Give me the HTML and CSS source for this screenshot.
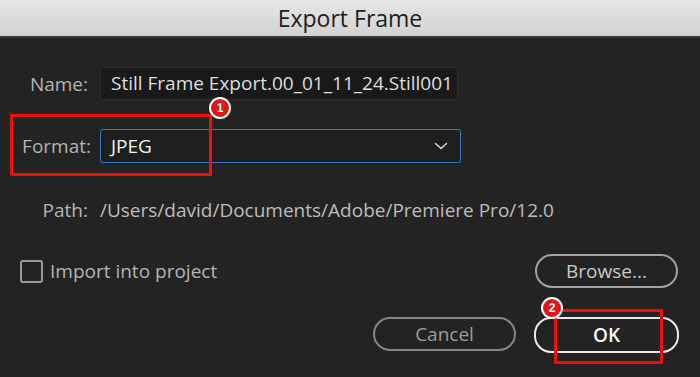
FILE: index.html
```html
<!DOCTYPE html>
<html lang="en">
<head>
    <meta charset="UTF-8">
    <meta name="viewport" content="width=device-width, initial-scale=1.0">
    <title>Export Frame</title>
    <link rel="stylesheet" href="styles.css">
</head>
<body>
    <div class="titlebar">Export Frame</div>

    <div class="dialog">
        <div class="form-row name-row">
            <label class="field-label" for="name">Name:</label>
            <div class="text-field" id="name">Still Frame Export.00_01_11_24.Still001</div>
        </div>

        <div class="form-row format-row">
            <label class="field-label">Format:</label>
            <div class="select-field">
                <span>JPEG</span>
                <svg class="chevron" width="14" height="8" viewBox="0 0 14 8">
                    <path d="M1.5 1.5 L7 6.5 L12.5 1.5" fill="none" stroke="#cfcfcf" stroke-width="1.6" stroke-linecap="round" stroke-linejoin="round"/>
                </svg>
            </div>
        </div>

        <div class="form-row path-row">
            <span class="field-label">Path:</span>
            <span class="path-value">/Users/david/Documents/Adobe/Premiere Pro/12.0</span>
        </div>

        <div class="import-row">
            <label class="checkbox">
                <span class="box"></span>
                Import into project
            </label>
            <button class="pill browse">Browse...</button>
        </div>

        <div class="actions">
            <button class="pill cancel">Cancel</button>
            <button class="pill ok">OK</button>
        </div>

        <!-- tutorial annotations -->
        <div class="mark mark-format"></div>
        <div class="badge badge-1">1</div>
        <div class="mark mark-ok"></div>
        <div class="badge badge-2">2</div>
    </div>
</body>
</html>
```

FILE: styles.css
```css
html, body {
    margin: 0;
    padding: 0;
    background-color: #232323;
}
body {
    width: 700px;
    height: 377px;
    overflow: hidden;
    font-family: "Open Sans", "Noto Sans", sans-serif;
}
.titlebar {
    height: 36px;
    line-height: 36px;
    text-align: center;
    font-size: 23px;
    color: #1e1e1e;
    background: linear-gradient(#e6e6e6, #d2d2d2);
    border-bottom: 2px solid #3a3a3a;
}
.dialog {
    position: relative;
    height: 339px;
    padding: 29px 0 0 0;
    box-sizing: border-box;
}
.form-row {
    display: flex;
    align-items: center;
}
.field-label {
    width: 88px;
    text-align: right;
    padding-right: 12px;
    font-size: 19px;
    line-height: 24px;
    color: #b4b4b4;
}
.text-field {
    width: 358px;
    height: 33px;
    box-sizing: border-box;
    padding: 0 0 0 10px;
    line-height: 31px;
    font-size: 19px;
    color: #dedede;
    background-color: #191919;
    border: 1px solid #2c2c2c;
    border-radius: 2px;
    white-space: nowrap;
    overflow: hidden;
}
.format-row {
    margin-top: 29px;
}
.format-row .field-label {
    width: 91px;
    padding-right: 9px;
}
.select-field {
    width: 361px;
    height: 34px;
    box-sizing: border-box;
    padding: 0 12px 0 10px;
    display: flex;
    align-items: center;
    justify-content: space-between;
    font-size: 19px;
    color: #f2f2f2;
    background-color: #1e1e1e;
    border: 1px solid #3b78c2;
    border-radius: 3px;
}
.path-row {
    margin-top: 35px;
}
.path-value {
    font-size: 19px;
    line-height: 24px;
    color: #bdbdbd;
}
.import-row {
    display: flex;
    align-items: center;
    justify-content: space-between;
    margin-top: 32px;
    padding: 0 22px 0 20px;
}
.checkbox {
    display: flex;
    align-items: center;
    gap: 7px;
    font-size: 19px;
    color: #b4b4b4;
}
.box {
    width: 19px;
    height: 19px;
    border: 2px solid #9a9a9a;
    border-radius: 3px;
}
.pill {
    width: 143px;
    height: 34px;
    border-radius: 17px;
    background: transparent;
    font-family: "Open Sans", "Noto Sans", sans-serif;
    font-size: 19px;
    padding: 0;
    cursor: pointer;
}
.browse {
    border: 2px solid #a2a2a2;
    color: #c8c8c8;
}
.actions {
    display: flex;
    justify-content: flex-end;
    gap: 18px;
    margin-top: 29px;
    padding-right: 21px;
}
.cancel {
    border: 2px solid #868686;
    color: #9c9c9c;
}
.ok {
    width: 145px;
    height: 36px;
    border: 2px solid #ececec;
    color: #ffffff;
    font-weight: 600;
}
.mark {
    position: absolute;
    border: 3px solid #f20d0d;
}
.mark-format {
    left: 10px;
    top: 76px;
    width: 196px;
    height: 56px;
}
.mark-ok {
    left: 554px;
    top: 271px;
    width: 103px;
    height: 49px;
}
.badge {
    position: absolute;
    width: 18px;
    height: 18px;
    line-height: 18px;
    border-radius: 50%;
    border: 2px solid #ffffff;
    background-color: #e4141b;
    color: #ffffff;
    font-family: "Liberation Sans", sans-serif;
    font-size: 12px;
    font-weight: bold;
    text-align: center;
}
.badge-1 {
    left: 209px;
    top: 59px;
}
.badge-2 {
    left: 541px;
    top: 259px;
}
```
